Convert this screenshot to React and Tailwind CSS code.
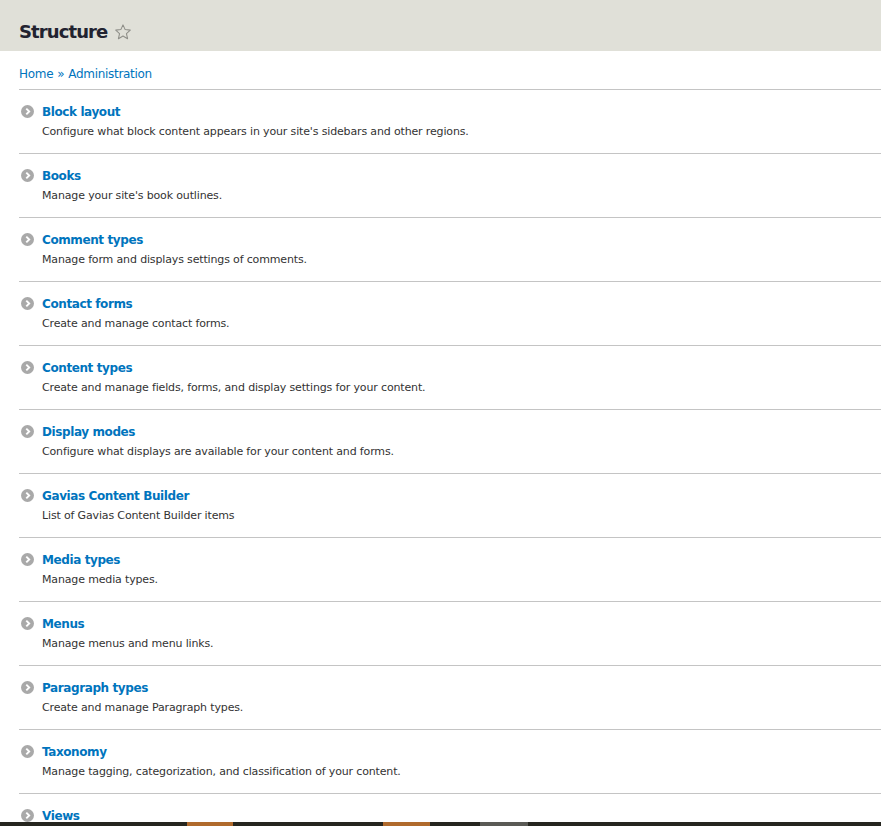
const ITEMS = [
  ['Block layout', "Configure what block content appears in your site's sidebars and other regions."],
  ['Books', "Manage your site's book outlines."],
  ['Comment types', 'Manage form and displays settings of comments.'],
  ['Contact forms', 'Create and manage contact forms.'],
  ['Content types', 'Create and manage fields, forms, and display settings for your content.'],
  ['Display modes', 'Configure what displays are available for your content and forms.'],
  ['Gavias Content Builder', 'List of Gavias Content Builder items'],
  ['Media types', 'Manage media types.'],
  ['Menus', 'Manage menus and menu links.'],
  ['Paragraph types', 'Create and manage Paragraph types.'],
  ['Taxonomy', 'Manage tagging, categorization, and classification of your content.'],
  ['Views', 'Manage customized lists of content.'],
]

function Bullet() {
  return (
    <svg width="13" height="13" viewBox="0 0 13 13" className="shrink-0">
      <circle cx="6.5" cy="6.5" r="6.5" fill="#a9a9a9" />
      <path d="M5.3 3.6l2.9 2.9-2.9 2.9" fill="none" stroke="#fff" strokeWidth="1.9" />
    </svg>
  )
}

export default function App() {
  return (
    <div className="relative h-[826px] overflow-hidden bg-white" style={{ fontFamily: '"DejaVu Sans", Verdana, sans-serif' }}>
      <div className="h-[51px] bg-[#e0e0d8] flex items-center px-[19px] pt-[12px]">
        <h1 className="text-[18px] font-bold tracking-[-0.9px] text-[#222330] leading-none">Structure</h1>
        <svg width="18" height="18" viewBox="0 0 24 24" className="ml-[7px] mt-[1px]" fill="none" stroke="#8e8e88" strokeWidth="1.4" strokeLinejoin="round">
          <path d="M12 2.5l2.9 6.3 6.8.7-5.1 4.6 1.5 6.8L12 17.4l-6.1 3.5 1.5-6.8-5.1-4.6 6.8-.7z" />
        </svg>
      </div>

      <div className="pl-[19px]">
        <div className="h-[38px] pt-[8px] flex items-center text-[12px] tracking-[-0.3px] text-[#0074bd]">
          <span>Home</span>
          <span className="mx-[4px]">»</span>
          <span>Administration</span>
        </div>
        <ul>
          {ITEMS.map(([title, desc]) => (
            <li key={title} className="border-t border-[#c4c4c4] h-[64px] pt-[13px]">
              <div className="flex items-center gap-[8px] pl-[2px] h-[17px]">
                <Bullet />
                <span className="text-[12px] font-bold tracking-[-0.4px] text-[#0074bd]">{title}</span>
              </div>
              <div className="pl-[23px] mt-[3px] text-[11px] tracking-[-0.15px] text-[#333] leading-[17px]">{desc}</div>
            </li>
          ))}
        </ul>
      </div>

      <div className="absolute left-0 right-0 bottom-0 h-[4px] bg-[#26261f] flex">
        <div className="ml-[187px] w-[46px] bg-[#b06a2c]" />
        <div className="ml-[150px] w-[47px] bg-[#b06a2c]" />
        <div className="ml-[50px] w-[48px] bg-[#5a5a55]" />
      </div>
    </div>
  )
}
